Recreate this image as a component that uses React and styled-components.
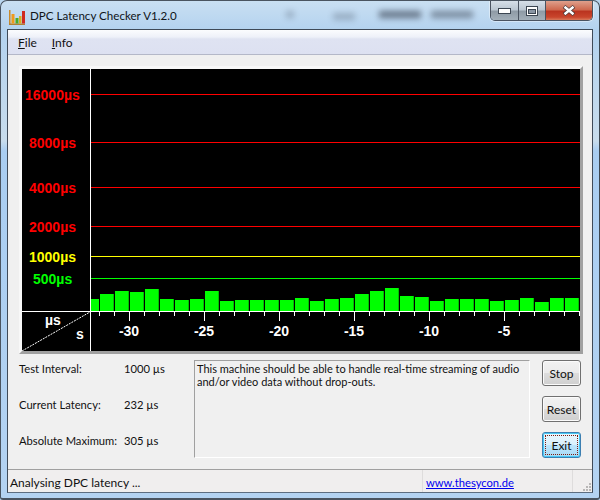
import React from 'react'
import styled, { createGlobalStyle } from 'styled-components'

const GlobalStyle = createGlobalStyle`
  html, body {
    margin: 0;
    padding: 0;
    background: #b9d6f0;
  }
  * {
    box-sizing: border-box;
  }
`

const uiFont = `Lato, "Noto Sans", "Liberation Sans", sans-serif`

const WindowFrame = styled.div`
  position: relative;
  width: 600px;
  height: 500px;
  display: flex;
  flex-direction: column;
  padding: 0 6px 5px;
  overflow: hidden;
  border: 1px solid #4a5460;
  border-right-color: #3c4650;
  border-bottom-width: 2px;
  border-radius: 7px 7px 3px 3px;
  background: linear-gradient(180deg, #c9dff2 0, #b3d2ef 30px, #c8dcec 140px, #a9cdf1 150px, #b4d3f2 100%);
  font-family: ${uiFont};
  color: #111;
`

const BlurBlob = styled.div`
  position: absolute;
  top: ${p => p.$top || 10}px;
  left: ${p => p.$left}px;
  width: ${p => p.$width}px;
  height: 7px;
  background: #3e4858;
  opacity: ${p => p.$opacity};
  filter: blur(3px);
`

const TitleBar = styled.div`
  position: relative;
  height: 28px;
  display: flex;
  align-items: flex-start;
  flex-shrink: 0;
`

const AppIcon = styled.svg`
  width: 16px;
  height: 16px;
  margin: 8px 5px 0 2px;
  flex-shrink: 0;
`

const TitleText = styled.div`
  margin-top: 6px;
  font-size: 11.6px;
  line-height: 18px;
  white-space: nowrap;
  color: #101418;
`

const CaptionButtons = styled.div`
  margin-left: auto;
  display: flex;
  height: 20px;
  border: 1px solid #4a5360;
  border-top: 0;
  border-radius: 0 0 5px 5px;
  overflow: hidden;
  box-shadow: 0 0 0 1px rgba(255, 255, 255, 0.4);
`

const CaptionButton = styled.div`
  width: ${p => (p.$close ? 47 : 27)}px;
  display: flex;
  align-items: center;
  justify-content: center;
  border-left: ${p => (p.$first ? 0 : '1px solid #4a5360')};
  background: ${p =>
    p.$close
      ? 'linear-gradient(180deg, #dfa08c 0, #cf6a50 45%, #bb3420 55%, #c9452c 85%, #d87a5c 100%)'
      : 'linear-gradient(180deg, #d6dfe8 0, #bcc7d2 45%, #8f9ba6 55%, #a3afb9 100%)'};
`

const ClientArea = styled.div`
  flex: 1;
  display: flex;
  flex-direction: column;
  border: 1px solid #3f4a58;
  border-bottom-color: #5d6d80;
  background: #f0f0f0;
`

const MenuBar = styled.div`
  height: 25px;
  flex-shrink: 0;
  display: flex;
  align-items: center;
  gap: 15px;
  padding: 0 0 0 10px;
  font-size: 12px;
  background: linear-gradient(180deg, #fbfcfe 0, #eef1f9 7px, #dfe3f2 9px, #dde1f1 100%);
  border-bottom: 1px solid #b4b8c8;
`

const ChartFrame = styled.div`
  margin: 11px 9px 0 11px;
  height: 288px;
  flex-shrink: 0;
  border: 3px solid;
  border-color: #f8f8f8 #a0a0a0 #a0a0a0 #f8f8f8;
  background: #000;
`

const ChartSvg = styled.svg`
  display: block;
  width: 558px;
  height: 282px;
`

const ChartLabel = styled.text`
  font-family: "Liberation Sans", Arial, sans-serif;
  font-size: 14px;
  font-weight: 700;
`

const InfoRow = styled.div`
  display: flex;
  margin: 6px 0 0 11px;
`

const Stats = styled.div`
  width: 175px;
  display: flex;
  flex-direction: column;
  gap: 20px;
  padding-top: 1px;
`

const StatRow = styled.div`
  display: flex;
  font-size: 11.2px;
  line-height: 16px;
  white-space: nowrap;
`

const StatName = styled.span`
  width: 105px;
`

const MessageBox = styled.div`
  width: 336px;
  height: 98px;
  padding: 1px 2px;
  border: 1px solid;
  border-color: #a0a0a0 #ffffff #ffffff #a0a0a0;
  font-size: 11px;
  line-height: 13px;
`

const ButtonColumn = styled.div`
  display: flex;
  flex-direction: column;
  gap: 10px;
  margin-left: 12px;
`

const ActionButton = styled.button`
  position: relative;
  width: 39px;
  height: 26px;
  padding: 0;
  font-family: ${uiFont};
  font-size: 12px;
  color: #111;
  border-radius: 3px;
  border: 1px solid ${p => (p.$focused ? '#3c7fb1' : '#707070')};
  box-shadow: inset 0 0 0 1px ${p => (p.$focused ? '#48c8f5' : '#fbfbfb')};
  background: ${p =>
    p.$focused
      ? 'linear-gradient(180deg, #eaf6fd 0, #d9f0fc 48%, #bee6fd 50%, #a7d9f5 100%)'
      : 'linear-gradient(180deg, #f2f2f2 0, #ebebeb 48%, #dddddd 50%, #cfcfcf 100%)'};

  ${p => (p.$focused ? `
    &::after {
      content: '';
      position: absolute;
      inset: 2px;
      border: 1px dotted #7a1c10;
    }
  ` : '')}
`

const StatusBar = styled.div`
  margin-top: auto;
  height: 23px;
  flex-shrink: 0;
  display: flex;
  align-items: center;
  border-top: 1px solid #a0a0a0;
  background: #f0eeee;
  font-size: 12px;
`

const StatusText = styled.div`
  flex: 1;
  padding: 2px 0 0 2px;
  white-space: nowrap;
`

const StatusLink = styled.a`
  width: 151px;
  height: 100%;
  display: flex;
  align-items: center;
  padding: 2px 0 0 3px;
  border-left: 1px solid #dedcdc;
  border-right: 1px solid #dedcdc;
  font-size: 11.2px;
  color: #0000ee;
  text-decoration: underline;
`

const GripCell = styled.div`
  width: 19px;
  height: 100%;
  display: flex;
  align-items: flex-end;
  justify-content: flex-end;
`

const lines = [
  { y: 94, label: '16000µs', x: 25, color: '#ff0000' },
  { y: 142, label: '8000µs', x: 29, color: '#ff0000' },
  { y: 187, label: '4000µs', x: 29, color: '#ff0000' },
  { y: 226, label: '2000µs', x: 29, color: '#ff0000' },
  { y: 256, label: '1000µs', x: 29, color: '#ffff00' },
  { y: 278, label: '500µs', x: 33, color: '#00ff00' },
]

const barHeights = [17, 20, 19, 22, 12, 11, 12, 20, 10, 11, 11, 11, 11, 13, 10, 12, 13, 17, 20, 23, 15, 14, 10, 12, 12, 12, 10, 11, 13, 9, 13, 13]

const ticks = Array.from({ length: 33 }, (_, i) => 99 + i * 15)
const axisLabels = [
  { x: 129, text: '-30' },
  { x: 204, text: '-25' },
  { x: 279, text: '-20' },
  { x: 354, text: '-15' },
  { x: 429, text: '-10' },
  { x: 504, text: '-5' },
]

const LatencyChart = () => (
  <ChartSvg viewBox="22 69 558 282">
    {lines.map(l => (
      <g key={l.y}>
        <rect x="90" y={l.y} width="490" height="1" fill={l.color} />
        <ChartLabel x={l.x} y={l.y + 6} fill={l.color}>{l.label}</ChartLabel>
      </g>
    ))}

    <rect x="91" y="299" width="8" height="12" fill="#00ff00" />
    {barHeights.map((h, i) => (
      <g key={i}>
        <rect x={100 + i * 15} y={311 - h} width="14" height={h} fill="#00ff00" />
        <rect x={113 + i * 15} y={311 - h} width="1" height={h} fill="#00c000" />
      </g>
    ))}

    <rect x="90" y="69" width="1" height="282" fill="#fff" />
    <rect x="22" y="311" width="558" height="1" fill="#fff" />
    {ticks.filter(x => x < 580).map(x => {
      const major = axisLabels.some(a => a.x === x)
      return <rect key={x} x={x} y="312" width="1" height={major ? 9 : 4} fill="#fff" />
    })}
    {axisLabels.map(a => (
      <ChartLabel key={a.x} x={a.x} y="336" fill="#fff" textAnchor="middle">{a.text}</ChartLabel>
    ))}

    <line x1="22" y1="351" x2="90" y2="312" stroke="#fff" strokeWidth="1" strokeDasharray="2 1" />
    <ChartLabel x="45" y="325" fill="#fff">µs</ChartLabel>
    <ChartLabel x="76" y="339" fill="#fff">s</ChartLabel>
  </ChartSvg>
)

const App = () => (
  <>
    <GlobalStyle />
    <WindowFrame>
      <BlurBlob $left={285} $width={8} $opacity={0.3} />
      <BlurBlob $left={332} $width={22} $opacity={0.3} $top={12} />
      <BlurBlob $left={378} $width={42} $opacity={0.7} />
      <BlurBlob $left={430} $width={42} $opacity={0.55} />

      <TitleBar>
        <AppIcon viewBox="0 0 16 16">
          <rect x="0" y="1" width="1.5" height="14" fill="#c88a2c" />
          <rect x="0" y="14.5" width="16" height="1.5" fill="#b08030" />
          <rect x="2.5" y="5" width="3" height="9.5" fill="#f09a1a" />
          <rect x="6.5" y="9" width="3" height="5.5" fill="#4aa82a" />
          <rect x="10" y="7" width="2.5" height="7.5" fill="#d8b020" />
          <rect x="13" y="2" width="3" height="12.5" fill="#d02a20" />
        </AppIcon>
        <TitleText>DPC Latency Checker V1.2.0</TitleText>
        <CaptionButtons>
          <CaptionButton $first>
            <svg width="13" height="6" viewBox="0 0 13 6">
              <rect x="0.5" y="0.5" width="12" height="5" fill="#fff" stroke="#3c4652" />
            </svg>
          </CaptionButton>
          <CaptionButton>
            <svg width="12" height="10" viewBox="0 0 12 10">
              <rect x="0.5" y="0.5" width="11" height="9" fill="#fff" stroke="#3c4652" />
              <rect x="2.5" y="3.5" width="7" height="4" fill="#8a96a4" stroke="#3c4652" />
            </svg>
          </CaptionButton>
          <CaptionButton $close>
            <svg width="14" height="11" viewBox="0 0 14 11">
              <path d="M2 1.5 L12 9.5 M12 1.5 L2 9.5" stroke="#4a3a3a" strokeWidth="4" fill="none" />
              <path d="M2.5 1.8 L11.5 9.2 M11.5 1.8 L2.5 9.2" stroke="#fff" strokeWidth="2.4" fill="none" />
            </svg>
          </CaptionButton>
        </CaptionButtons>
      </TitleBar>

      <ClientArea>
        <MenuBar>
          <span><u>F</u>ile</span>
          <span><u>I</u>nfo</span>
        </MenuBar>

        <ChartFrame>
          <LatencyChart />
        </ChartFrame>

        <InfoRow>
          <Stats>
            <StatRow><StatName>Test Interval:</StatName>1000 µs</StatRow>
            <StatRow><StatName>Current Latency:</StatName>232 µs</StatRow>
            <StatRow><StatName>Absolute Maximum:</StatName>305 µs</StatRow>
          </Stats>
          <MessageBox>
            This machine should be able to handle real-time streaming of audio and/or video data without drop-outs.
          </MessageBox>
          <ButtonColumn>
            <ActionButton>Stop</ActionButton>
            <ActionButton>Reset</ActionButton>
            <ActionButton $focused>Exit</ActionButton>
          </ButtonColumn>
        </InfoRow>

        <StatusBar>
          <StatusText>Analysing DPC latency ...</StatusText>
          <StatusLink href="#">www.thesycon.de</StatusLink>
          <GripCell>
            <svg width="10" height="10" viewBox="0 0 10 10" fill="#b8b6b6">
              <rect x="7" y="1" width="2" height="2" />
              <rect x="4" y="4" width="2" height="2" />
              <rect x="7" y="4" width="2" height="2" />
              <rect x="1" y="7" width="2" height="2" />
              <rect x="4" y="7" width="2" height="2" />
              <rect x="7" y="7" width="2" height="2" />
            </svg>
          </GripCell>
        </StatusBar>
      </ClientArea>
    </WindowFrame>
  </>
)

export default App
